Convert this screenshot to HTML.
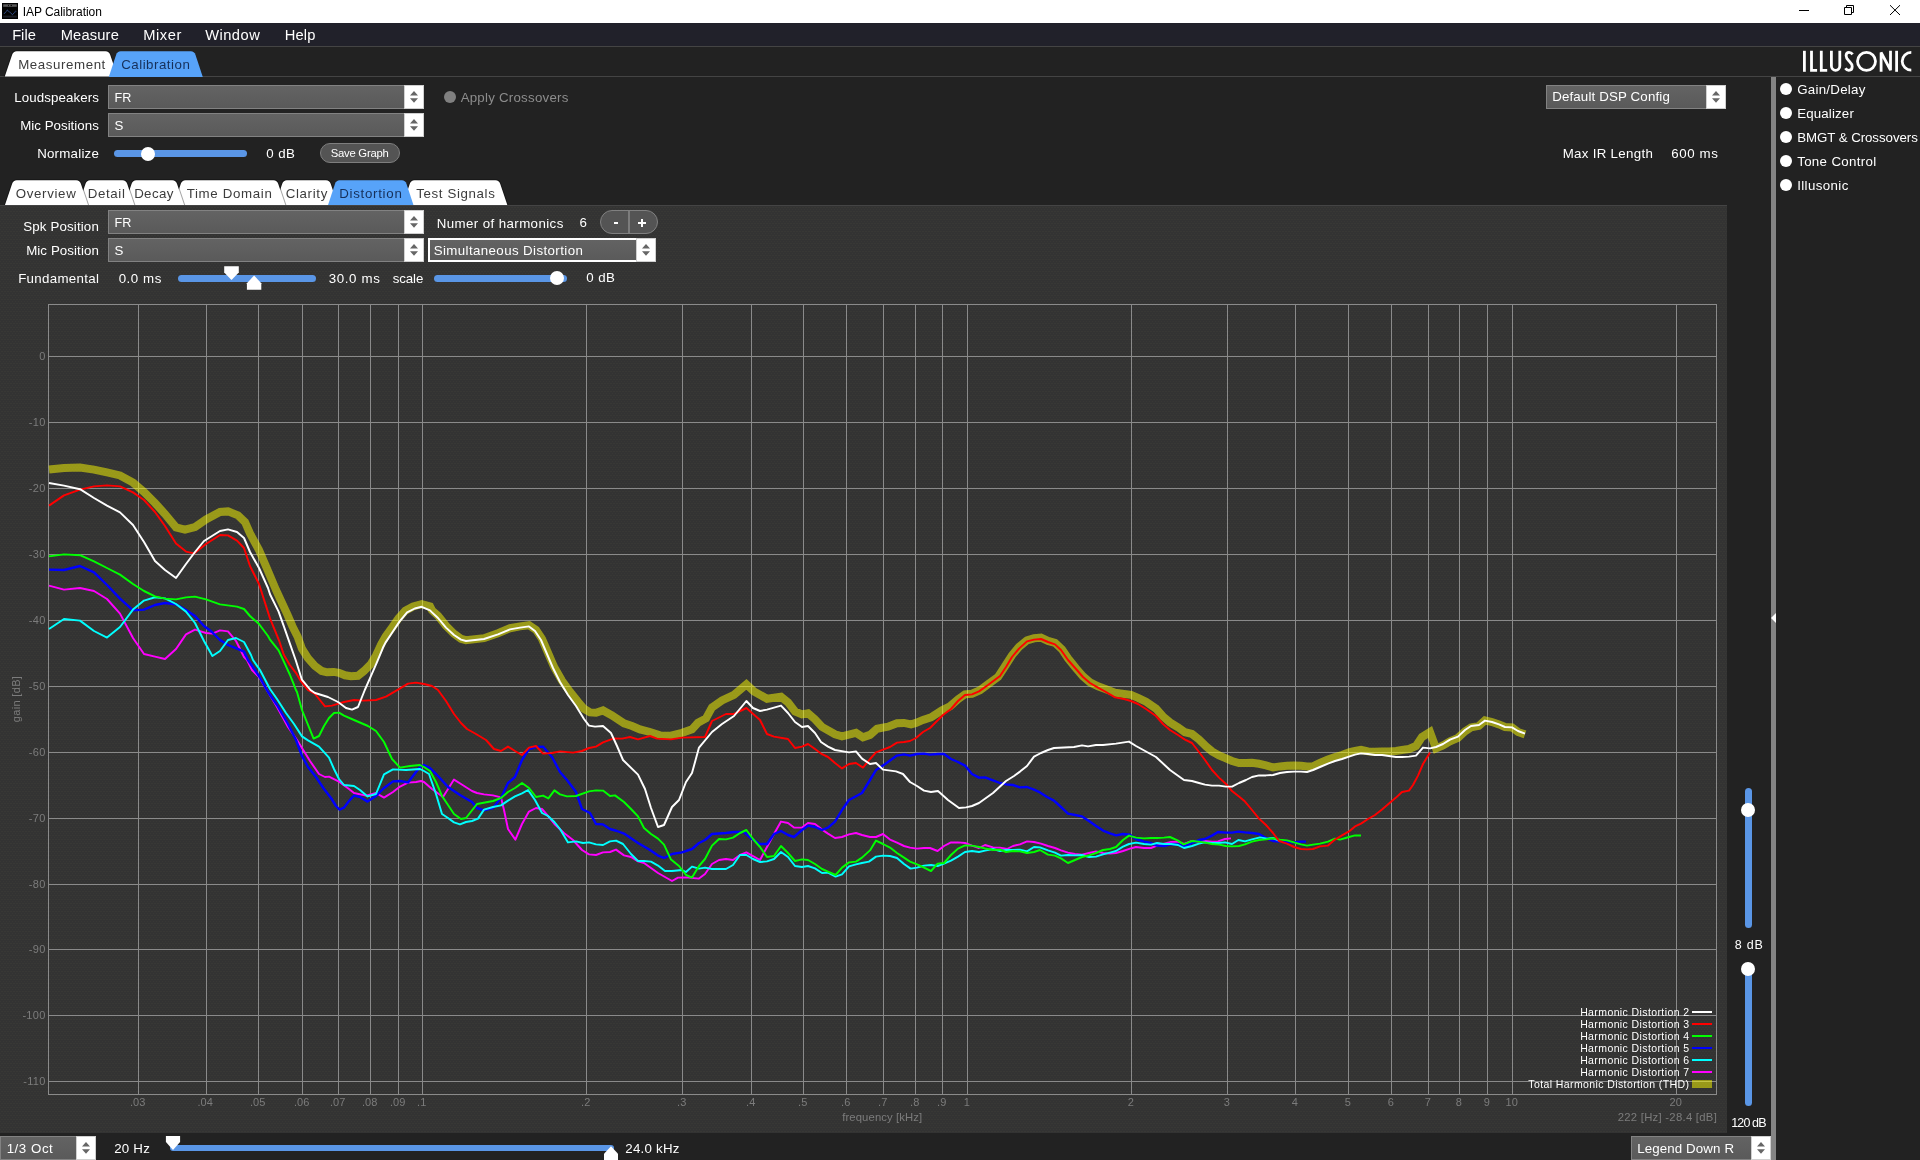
<!DOCTYPE html>
<html><head><meta charset="utf-8"><title>IAP Calibration</title>
<style>
html,body{margin:0;padding:0;background:#222;}
#root{will-change:transform;position:relative;width:1920px;height:1160px;overflow:hidden;background:#222;font-family:"Liberation Sans",sans-serif;}
.t{position:absolute;white-space:nowrap;line-height:20px;height:20px;}
</style></head><body><div id="root">
<div style="position:absolute;left:0px;top:0px;width:1920px;height:23px;background:#fff;"></div>
<svg style="position:absolute;left:2px;top:3px" width="16" height="16"><rect width="16" height="16" fill="#020202"/><rect x="1.200" y="1.300" width="13.600" height="2.500" fill="#5a5a5a"/><rect x="6" y="1.900" width="1" height="1.300" fill="#111"/><circle cx="9.300" cy="2.500" r="0.800" fill="#050505"/><path d="M2 10.700 L5.500 7.200 L10.500 11.700 L14.300 7.700" stroke="#34508a" stroke-width="1.100" fill="none" stroke-dasharray="1 0.600"/><rect x="1.200" y="12.600" width="13.600" height="2" fill="#1d1f26"/></svg>
<div class="t" style="left:22.65px;top:2.14px;font-size:12px;letter-spacing:-0.043px;color:#000;">IAP Calibration</div>
<svg style="position:absolute;left:1790px;top:0" width="130" height="23"><path d="M9 10.5H19" stroke="#000" stroke-width="1"/><path d="M54.5 7.5h7v7h-7z M56.5 7.5v-2h7v7h-2" stroke="#000" stroke-width="1" fill="none"/><path d="M100 5.200l10 9.800M110 5.200l-10 9.800" stroke="#000" stroke-width="1"/></svg>
<div style="position:absolute;left:0px;top:23px;width:1920px;height:23px;background:#21212a;"></div>
<div style="position:absolute;left:0px;top:46px;width:1920px;height:1px;background:#444;"></div>
<div class="t" style="left:12.15px;top:25.17px;font-size:14.7px;letter-spacing:0.011px;color:#fff;">File</div>
<div class="t" style="left:60.65px;top:25.17px;font-size:14.7px;letter-spacing:0.170px;color:#fff;">Measure</div>
<div class="t" style="left:143.15px;top:25.17px;font-size:14.7px;letter-spacing:0.565px;color:#fff;">Mixer</div>
<div class="t" style="left:205.15px;top:25.17px;font-size:14.7px;letter-spacing:0.474px;color:#fff;">Window</div>
<div class="t" style="left:284.65px;top:25.17px;font-size:14.7px;letter-spacing:0.164px;color:#fff;">Help</div>
<div style="position:absolute;left:0px;top:76px;width:1920px;height:1px;background:#444;"></div>
<svg style="position:absolute;left:0;top:0" width="700" height="206">
<clipPath id="c1"><rect x="0" y="40" width="700" height="37"/></clipPath><clipPath id="c2"><rect x="0" y="170" width="700" height="36"/></clipPath>
<g clip-path="url(#c1)">
<path d="M4.800000000000001 76.5 L12.12 54.8 Q13.3 51.3 16.8 51.3 L105.5 51.3 Q109 51.3 110.18 54.8 L117.5 76.5Z" fill="none" stroke="rgba(0,0,0,0.35)" stroke-width="2"/>
<path d="M4.800000000000001 76.5 L12.12 54.8 Q13.3 51.3 16.8 51.3 L105.5 51.3 Q109 51.3 110.18 54.8 L117.5 76.5Z" fill="#fff"/>
<path d="M108.8 77 L116.14 54.8 Q117.3 51.3 120.8 51.3 L190.8 51.3 Q194.3 51.3 195.46 54.8 L202.8 77Z" fill="#57a3f9"/>
</g><g clip-path="url(#c2)">
<path d="M402.5 205.5 L409.82 183.8 Q411 180.3 414.5 180.3 L495.5 180.3 Q499 180.3 500.18 183.8 L507.5 205.5Z" fill="none" stroke="rgba(0,0,0,0.35)" stroke-width="2"/>
<path d="M402.5 205.5 L409.82 183.8 Q411 180.3 414.5 180.3 L495.5 180.3 Q499 180.3 500.18 183.8 L507.5 205.5Z" fill="#fff"/>
<path d="M274.9 205.5 L282.22 183.8 Q283.4 180.3 286.9 180.3 L326.0 180.3 Q329.5 180.3 330.68 183.8 L338.0 205.5Z" fill="none" stroke="rgba(0,0,0,0.35)" stroke-width="2"/>
<path d="M274.9 205.5 L282.22 183.8 Q283.4 180.3 286.9 180.3 L326.0 180.3 Q329.5 180.3 330.68 183.8 L338.0 205.5Z" fill="#fff"/>
<path d="M173.5 205.5 L180.82 183.8 Q182 180.3 185.5 180.3 L273.5 180.3 Q277 180.3 278.18 183.8 L285.5 205.5Z" fill="none" stroke="rgba(0,0,0,0.35)" stroke-width="2"/>
<path d="M173.5 205.5 L180.82 183.8 Q182 180.3 185.5 180.3 L273.5 180.3 Q277 180.3 278.18 183.8 L285.5 205.5Z" fill="#fff"/>
<path d="M124.30000000000001 205.5 L131.62 183.8 Q132.8 180.3 136.3 180.3 L172.3 180.3 Q175.8 180.3 176.98 183.8 L184.3 205.5Z" fill="none" stroke="rgba(0,0,0,0.35)" stroke-width="2"/>
<path d="M124.30000000000001 205.5 L131.62 183.8 Q132.8 180.3 136.3 180.3 L172.3 180.3 Q175.8 180.3 176.98 183.8 L184.3 205.5Z" fill="#fff"/>
<path d="M78.2 205.5 L85.52 183.8 Q86.7 180.3 90.2 180.3 L122.5 180.3 Q126 180.3 127.18 183.8 L134.5 205.5Z" fill="none" stroke="rgba(0,0,0,0.35)" stroke-width="2"/>
<path d="M78.2 205.5 L85.52 183.8 Q86.7 180.3 90.2 180.3 L122.5 180.3 Q126 180.3 127.18 183.8 L134.5 205.5Z" fill="#fff"/>
<path d="M4.800000000000001 205.5 L12.12 183.8 Q13.3 180.3 16.8 180.3 L76.2 180.3 Q79.7 180.3 80.88 183.8 L88.2 205.5Z" fill="none" stroke="rgba(0,0,0,0.35)" stroke-width="2"/>
<path d="M4.800000000000001 205.5 L12.12 183.8 Q13.3 180.3 16.8 180.3 L76.2 180.3 Q79.7 180.3 80.88 183.8 L88.2 205.5Z" fill="#fff"/>
<path d="M327.7 206 L335.04 183.8 Q336.2 180.3 339.7 180.3 L401.8 180.3 Q405.3 180.3 406.46 183.8 L413.8 206Z" fill="#57a3f9"/>
</g></svg>
<div class="t" style="left:18.15px;top:54.65px;font-size:13.3px;letter-spacing:0.587px;color:#3c3c3c;">Measurement</div>
<div class="t" style="left:121.15px;top:54.65px;font-size:13.3px;letter-spacing:0.513px;color:#16305a;">Calibration</div>
<div class="t" style="left:15.65px;top:183.65px;font-size:13.3px;letter-spacing:0.677px;color:#3c3c3c;">Overview</div>
<div class="t" style="left:87.65px;top:183.65px;font-size:13.3px;letter-spacing:0.644px;color:#3c3c3c;">Detail</div>
<div class="t" style="left:134.15px;top:183.65px;font-size:13.3px;letter-spacing:0.374px;color:#3c3c3c;">Decay</div>
<div class="t" style="left:186.65px;top:183.65px;font-size:13.3px;letter-spacing:0.660px;color:#3c3c3c;">Time Domain</div>
<div class="t" style="left:285.65px;top:183.65px;font-size:13.3px;letter-spacing:0.666px;color:#3c3c3c;">Clarity</div>
<div class="t" style="left:339.15px;top:183.65px;font-size:13.3px;letter-spacing:0.723px;color:#16305a;">Distortion</div>
<div class="t" style="left:416.15px;top:183.65px;font-size:13.3px;letter-spacing:0.638px;color:#3c3c3c;">Test Signals</div>
<div class="t" style="left:14.15px;top:87.65px;font-size:13.3px;letter-spacing:0.107px;color:#fff;">Loudspeakers</div>
<div style="position:absolute;left:108px;top:85px;width:316px;height:24px;background:linear-gradient(#636363,#5a5a5a);box-sizing:border-box;border:1px solid #828282;"></div>
<div style="position:absolute;left:404px;top:85px;width:20px;height:24px;background:#fff;box-sizing:border-box;border:1px solid #d0d0d0;"></div>
<svg style="position:absolute;left:404px;top:85px" width="20" height="24"><path d="M6 10.6 L10 6.0 L14 10.6Z M6 13.2 L10 17.8 L14 13.2Z" fill="#666"/></svg>
<div class="t" style="left:114.60px;top:87.94px;font-size:12.6px;color:#fff;">FR</div>
<div class="t" style="left:20.15px;top:115.65px;font-size:13.3px;letter-spacing:0.030px;color:#fff;">Mic Positions</div>
<div style="position:absolute;left:108px;top:113px;width:316px;height:24px;background:linear-gradient(#636363,#5a5a5a);box-sizing:border-box;border:1px solid #828282;"></div>
<div style="position:absolute;left:404px;top:113px;width:20px;height:24px;background:#fff;box-sizing:border-box;border:1px solid #d0d0d0;"></div>
<svg style="position:absolute;left:404px;top:113px" width="20" height="24"><path d="M6 10.6 L10 6.0 L14 10.6Z M6 13.2 L10 17.8 L14 13.2Z" fill="#666"/></svg>
<div class="t" style="left:114.50px;top:115.95px;font-size:13.3px;color:#fff;">S</div>
<div class="t" style="left:37.15px;top:143.65px;font-size:13.3px;letter-spacing:0.231px;color:#fff;">Normalize</div>
<div style="position:absolute;left:114px;top:150.0px;width:133px;height:7px;background:#5a96e6;border-radius:3.5px;"></div>
<div style="position:absolute;left:141px;top:146.5px;width:14px;height:14px;background:#fff;border-radius:7px;"></div>
<div class="t" style="left:266.15px;top:143.65px;font-size:13.3px;letter-spacing:0.456px;color:#fff;">0 dB</div>
<div style="position:absolute;left:320px;top:143px;width:80px;height:20px;background:#545454;border:1px solid #7e7e7e;border-radius:10px;box-sizing:border-box;"></div>
<div class="t" style="left:330.65px;top:143.13px;font-size:11.3px;letter-spacing:-0.232px;color:#fff;">Save Graph</div>
<div style="position:absolute;left:444px;top:91px;width:12px;height:12px;background:#808080;border-radius:6px;"></div>
<div class="t" style="left:460.65px;top:87.65px;font-size:13.3px;letter-spacing:0.233px;color:#8c8c8c;">Apply Crossovers</div>
<div style="position:absolute;left:1546px;top:85px;width:180px;height:24px;background:linear-gradient(#636363,#5a5a5a);box-sizing:border-box;border:1px solid #828282;"></div>
<div style="position:absolute;left:1706px;top:85px;width:20px;height:24px;background:#fff;box-sizing:border-box;border:1px solid #d0d0d0;"></div>
<svg style="position:absolute;left:1706px;top:85px" width="20" height="24"><path d="M6 10.6 L10 6.0 L14 10.6Z M6 13.2 L10 17.8 L14 13.2Z" fill="#666"/></svg>
<div class="t" style="left:1552.15px;top:87.45px;font-size:13.3px;letter-spacing:0.152px;color:#fff;">Default DSP Config</div>
<div class="t" style="left:1562.65px;top:143.65px;font-size:13.3px;letter-spacing:0.307px;color:#fff;">Max IR Length</div>
<div class="t" style="left:1671.15px;top:143.65px;font-size:13.3px;letter-spacing:0.615px;color:#fff;">600 ms</div>
<svg style="position:absolute;left:1790px;top:44px" width="130" height="34" viewBox="0 0 130 34"><g fill="none" stroke="#fff" stroke-width="2.8"><path d="M14.4 6.8V27.8"/><path d="M21.500 6.8V26.3H27.1"/><path d="M31.3 6.8V26.3H37.2"/><path d="M41.4 6.8V22.1a4.2 4.2 0 0 0 8.4 0V6.8"/><path d="M62.600 10.400C61.600 8.900 60.500 8.300 59 8.300C57.200 8.300 56.100 9.800 56.100 11.800C56.100 14.500 58 16 59.500 17.500C61 19 62.200 20.500 62.200 22.500C62.200 24.800 60.800 26.300 58.800 26.300C57.300 26.300 56.200 25.600 55.400 24.300"/><circle cx="76.500" cy="17.3" r="9"/><path d="M91.100 27.8V8.500L100.500 26.200V6.800" stroke-linejoin="miter"/><path d="M106.600 6.8V27.800"/><path d="M121.300 8.400A9.100 8.900 0 0 0 121.300 26.200"/></g></svg>
<div style="position:absolute;left:1771px;top:77px;width:5px;height:1083px;background:#848484;"></div>
<svg style="position:absolute;left:1771px;top:612px" width="6" height="12"><path d="M5 1 L0 6 L5 11Z" fill="#fff"/></svg>
<div style="position:absolute;left:1779.6px;top:83px;width:12px;height:12px;background:#fff;border-radius:6px;"></div>
<div class="t" style="left:1797.15px;top:79.65px;font-size:13.3px;letter-spacing:0.270px;color:#fff;">Gain/Delay</div>
<div style="position:absolute;left:1779.6px;top:107px;width:12px;height:12px;background:#fff;border-radius:6px;"></div>
<div class="t" style="left:1797.15px;top:103.65px;font-size:13.3px;letter-spacing:0.155px;color:#fff;">Equalizer</div>
<div style="position:absolute;left:1779.6px;top:131px;width:12px;height:12px;background:#fff;border-radius:6px;"></div>
<div class="t" style="left:1797.15px;top:127.65px;font-size:13.3px;letter-spacing:-0.062px;color:#fff;">BMGT &amp; Crossovers</div>
<div style="position:absolute;left:1779.6px;top:155px;width:12px;height:12px;background:#fff;border-radius:6px;"></div>
<div class="t" style="left:1797.15px;top:151.65px;font-size:13.3px;letter-spacing:0.344px;color:#fff;">Tone Control</div>
<div style="position:absolute;left:1779.6px;top:179px;width:12px;height:12px;background:#fff;border-radius:6px;"></div>
<div class="t" style="left:1797.15px;top:175.65px;font-size:13.3px;letter-spacing:0.390px;color:#fff;">Illusonic</div>
<div style="position:absolute;left:0;top:205px;width:1727px;height:928px;background-color:#333;background-image:radial-gradient(circle at 0.5px 0.5px,#383835 0.6px,transparent 1px),radial-gradient(circle at 2px 2.5px,#383835 0.6px,transparent 1px);background-size:3px 4px;"></div>
<div style="position:absolute;left:0px;top:205px;width:1727px;height:1px;background:#444;"></div>
<div class="t" style="left:23.15px;top:216.95px;font-size:13.3px;letter-spacing:0.159px;color:#fff;">Spk Position</div>
<div style="position:absolute;left:108px;top:210px;width:316px;height:24px;background:linear-gradient(#636363,#5a5a5a);box-sizing:border-box;border:1px solid #828282;"></div>
<div style="position:absolute;left:404px;top:210px;width:20px;height:24px;background:#fff;box-sizing:border-box;border:1px solid #d0d0d0;"></div>
<svg style="position:absolute;left:404px;top:210px" width="20" height="24"><path d="M6 10.6 L10 6.0 L14 10.6Z M6 13.2 L10 17.8 L14 13.2Z" fill="#666"/></svg>
<div class="t" style="left:114.50px;top:212.64px;font-size:12.6px;color:#fff;">FR</div>
<div class="t" style="left:26.15px;top:240.65px;font-size:13.3px;letter-spacing:0.092px;color:#fff;">Mic Position</div>
<div style="position:absolute;left:108px;top:238px;width:316px;height:24px;background:linear-gradient(#636363,#5a5a5a);box-sizing:border-box;border:1px solid #828282;"></div>
<div style="position:absolute;left:404px;top:238px;width:20px;height:24px;background:#fff;box-sizing:border-box;border:1px solid #d0d0d0;"></div>
<svg style="position:absolute;left:404px;top:238px" width="20" height="24"><path d="M6 10.6 L10 6.0 L14 10.6Z M6 13.2 L10 17.8 L14 13.2Z" fill="#666"/></svg>
<div class="t" style="left:114.50px;top:240.75px;font-size:13.3px;color:#fff;">S</div>
<div class="t" style="left:436.65px;top:213.85px;font-size:13.3px;letter-spacing:0.408px;color:#fff;">Numer of harmonics</div>
<div class="t" style="left:579.50px;top:213.15px;font-size:13.3px;color:#fff;">6</div>
<div style="position:absolute;left:600px;top:210px;width:58px;height:24px;background:#545454;border:1px solid #808080;border-radius:12px;box-sizing:border-box;"></div>
<div style="position:absolute;left:628px;top:211px;width:2px;height:22px;background:#7c7c7c;"></div>
<div style="position:absolute;left:613.8px;top:221.8px;width:4.4px;height:2.2px;background:#fff;"></div>
<div style="position:absolute;left:638px;top:222px;width:8.1px;height:2px;background:#fff;"></div>
<div style="position:absolute;left:641px;top:219px;width:2.1px;height:7.8px;background:#fff;"></div>
<div style="position:absolute;left:428px;top:238px;width:228px;height:24px;background:linear-gradient(#636363,#5a5a5a);box-sizing:border-box;border:1px solid #828282;"></div>
<div style="position:absolute;left:428px;top:238px;width:212px;height:24px;box-sizing:border-box;border:2px solid #fff;"></div>
<div style="position:absolute;left:636px;top:238px;width:20px;height:24px;background:#fff;box-sizing:border-box;border:1px solid #d0d0d0;"></div>
<svg style="position:absolute;left:636px;top:238px" width="20" height="24"><path d="M6 10.6 L10 6.0 L14 10.6Z M6 13.2 L10 17.8 L14 13.2Z" fill="#666"/></svg>
<div class="t" style="left:433.65px;top:240.65px;font-size:13.3px;letter-spacing:0.398px;color:#fff;">Simultaneous Distortion</div>
<div class="t" style="left:18.15px;top:268.65px;font-size:13.3px;letter-spacing:0.309px;color:#fff;">Fundamental</div>
<div class="t" style="left:118.65px;top:268.65px;font-size:13.3px;letter-spacing:0.560px;color:#fff;">0.0 ms</div>
<div style="position:absolute;left:177.8px;top:274.5px;width:138.39999999999998px;height:7px;background:#5a96e6;border-radius:3.5px;"></div>
<svg style="position:absolute;left:220px;top:264px" width="46" height="30"><path d="M4.200 2.200 h14.600 v6.200 l-7.300 7.600 l-7.300 -7.600z" fill="#fff"/><path d="M26.900 25.700 h14.400 v-6.500 l-7.200 -7.600 l-7.200 7.600z" fill="#fff"/></svg>
<div class="t" style="left:328.65px;top:268.65px;font-size:13.3px;letter-spacing:0.653px;color:#fff;">30.0 ms</div>
<div class="t" style="left:392.65px;top:268.65px;font-size:13.3px;letter-spacing:-0.089px;color:#fff;">scale</div>
<div style="position:absolute;left:434px;top:274.5px;width:133px;height:7px;background:#5a96e6;border-radius:3.5px;"></div>
<div style="position:absolute;left:550px;top:271px;width:14px;height:14px;background:#fff;border-radius:7px;"></div>
<div class="t" style="left:586.15px;top:268.15px;font-size:13.3px;letter-spacing:0.456px;color:#fff;">0 dB</div>
<svg style="position:absolute;left:0;top:0" width="1920" height="1160">
<path d="M138.5 304V1094 M206 304V1094 M258.5 304V1094 M302.5 304V1094 M338.5 304V1094 M370.5 304V1094 M398.5 304V1094 M422.5 304V1094 M586.5 304V1094 M682.5 304V1094 M751.5 304V1094 M803.5 304V1094 M846.5 304V1094 M883.5 304V1094 M915.5 304V1094 M942.5 304V1094 M967.5 304V1094 M1131.5 304V1094 M1227.5 304V1094 M1295.5 304V1094 M1348.5 304V1094 M1391.5 304V1094 M1428.5 304V1094 M1459.5 304V1094 M1487.5 304V1094 M1512.5 304V1094 M1676.5 304V1094 M48 356.5H1716 M48 422.5H1716 M48 488.5H1716 M48 554.5H1716 M48 620.5H1716 M48 686.5H1716 M48 752.5H1716 M48 818.5H1716 M48 884.5H1716 M48 949.5H1716 M48 1015.5H1716 M48 1081.5H1716" stroke="#8a8a8a" stroke-width="1" fill="none" shape-rendering="crispEdges"/>
<rect x="48.5" y="304.5" width="1668" height="790" stroke="#8a8a8a" stroke-width="1" fill="none" shape-rendering="crispEdges"/>
<polyline points="49.0,469.6 64.0,468.0 80.0,467.6 94.0,469.6 107.0,472.4 120.0,475.4 133.0,482.6 144.0,492.0 155.0,503.0 165.0,514.0 176.0,527.4 185.0,529.6 195.0,527.0 206.0,519.4 220.0,512.0 228.0,511.4 238.0,515.4 245.0,522.0 250.0,533.4 259.0,550.0 268.0,571.0 276.0,590.0 281.2,601.2 287.2,614.1 292.4,626.2 297.6,636.6 301.9,648.6 307.9,658.1 314.8,665.9 321.7,671.0 326.9,672.3 333.8,671.9 339.0,672.8 345.0,675.3 351.0,676.2 357.9,675.8 364.0,671.0 370.9,664.1 376.0,655.5 381.2,644.3 385.5,636.6 392.4,627.1 398.4,618.4 405.3,610.7 413.1,606.4 421.7,604.2 430.0,606.4 432.0,610.4 438.0,615.8 446.0,625.8 454.0,633.8 461.0,638.8 466.0,640.2 484.0,638.2 498.0,633.2 510.0,628.2 520.0,626.4 529.0,625.2 536.0,629.8 542.0,638.8 548.0,652.8 554.0,666.8 562.0,680.8 570.0,691.8 578.0,701.8 584.0,708.8 590.0,712.4 596.0,712.8 603.0,710.4 612.0,715.4 624.0,723.4 632.0,726.0 640.0,729.4 650.0,732.0 660.0,735.4 670.0,735.8 682.0,732.8 692.0,729.4 698.0,722.8 706.0,718.4 712.0,707.4 722.0,700.4 734.0,694.8 746.4,684.4 754.0,691.4 767.0,698.8 781.0,696.8 788.0,702.4 795.0,711.4 802.0,714.4 808.0,713.3 815.0,719.3 822.0,726.9 835.0,734.3 842.0,736.3 856.0,732.9 863.0,737.3 870.0,734.9 877.0,728.7 888.0,726.7 897.0,723.3 904.0,722.9 911.0,724.3 916.0,722.9 923.0,719.9 931.0,717.3 942.0,710.3 950.0,706.3 958.0,699.3 965.0,694.3 972.0,693.7 980.0,690.3 988.0,684.3 998.0,676.9 1005.0,666.3 1012.0,655.3 1019.0,646.9 1027.0,640.3 1034.0,638.3 1041.0,637.7 1048.0,640.9 1055.0,642.9 1062.0,649.3 1068.0,658.3 1076.0,668.3 1083.0,676.3 1090.0,682.3 1098.0,686.3 1106.0,689.2 1115.0,692.7 1124.0,694.0 1131.0,694.9 1138.0,697.8 1146.0,701.7 1156.0,708.6 1163.0,716.5 1170.0,722.4 1178.0,727.3 1185.0,732.2 1192.0,734.0 1199.0,739.4 1206.0,746.4 1212.0,751.4 1219.0,755.4 1226.0,758.4 1232.0,761.0 1239.0,763.0 1246.0,763.0 1252.0,762.8 1259.0,763.8 1266.0,765.4 1273.0,767.4 1280.0,766.4 1287.0,765.8 1294.0,765.4 1301.0,765.8 1307.0,766.4 1313.0,766.4 1320.0,762.8 1328.0,759.4 1335.0,757.0 1342.0,755.0 1349.0,752.4 1355.0,750.8 1361.0,749.8 1368.0,751.4 1375.0,751.8 1382.0,751.4 1389.0,751.4 1396.0,751.0 1402.0,750.0 1409.0,749.0 1416.0,746.0 1422.0,737.0 1430.0,732.0 1436.0,748.4 1443.0,745.4 1450.0,741.4 1458.0,737.8 1465.0,731.4 1471.0,727.4 1479.0,725.8 1485.0,720.4 1492.0,722.0 1499.0,724.4 1505.0,727.0 1512.0,727.4 1518.0,732.0 1525.0,734.4" stroke="rgba(255,255,0,0.5)" stroke-width="8" fill="none" stroke-linejoin="miter" stroke-miterlimit="4"/>
<polyline points="49.0,585.6 64.0,589.6 80.0,588.0 94.0,591.0 107.0,599.0 120.0,613.6 133.0,638.0 144.0,654.0 155.0,656.6 165.0,659.0 176.0,649.0 186.0,634.4 195.0,629.6 206.0,633.0 212.4,633.6 220.0,630.4 228.0,631.4 236.0,641.0 244.0,657.0 247.0,660.0 252.0,670.0 259.0,677.0 268.0,692.0 277.0,707.0 288.0,727.0 297.0,740.0 302.0,748.0 310.0,761.0 319.0,774.0 325.0,777.0 329.0,776.6 339.0,781.6 349.0,789.0 354.0,793.0 366.0,795.6 376.0,793.0 384.0,797.6 393.0,792.0 400.0,786.6 408.0,782.6 416.0,782.0 421.0,781.0 424.0,782.0 432.0,789.0 443.0,797.0 454.0,779.6 461.0,784.0 472.0,791.0 477.0,793.0 484.0,794.4 493.0,795.4 501.0,797.4 504.0,810.0 508.0,829.0 515.4,839.6 522.0,824.0 529.0,811.6 536.0,808.0 542.0,809.0 548.0,816.0 554.4,824.0 564.0,833.0 573.0,840.0 582.0,850.0 589.0,854.4 596.0,855.0 603.0,852.4 610.0,852.0 616.0,849.6 624.0,855.4 631.0,857.0 638.0,861.4 644.0,863.0 651.0,868.0 658.0,873.0 665.0,877.0 672.0,881.0 678.0,877.6 686.0,877.4 699.0,878.6 705.0,874.0 712.0,864.0 719.0,860.0 726.0,859.0 733.0,860.0 740.0,855.0 746.4,852.4 760.0,860.0 767.0,847.0 774.0,834.0 781.0,821.6 788.0,823.0 794.0,827.6 802.0,827.6 808.0,823.0 815.0,824.0 822.0,829.6 828.0,833.6 835.0,838.0 842.0,837.0 849.0,834.4 856.0,833.0 862.0,835.0 870.0,837.0 876.0,837.0 883.0,834.0 890.0,839.6 897.0,842.6 904.0,846.0 910.0,847.6 917.0,848.6 924.0,848.0 930.0,848.0 937.6,851.0 944.0,846.0 951.0,842.4 958.0,842.4 965.0,843.0 972.0,845.6 979.0,848.0 985.0,845.0 993.0,847.4 1000.0,847.6 1007.0,849.0 1013.0,846.0 1020.0,844.4 1027.0,841.4 1034.0,842.0 1041.0,843.6 1048.0,846.0 1055.0,848.0 1061.0,850.4 1068.0,852.6 1075.0,854.0 1082.0,854.6 1089.0,853.0 1096.0,851.4 1103.0,853.0 1110.0,853.6 1116.0,853.0 1123.0,851.0 1130.0,848.6 1136.0,847.0 1144.0,848.0 1151.0,848.0 1157.0,845.6 1164.0,843.6 1171.0,842.0 1178.0,841.6 1184.0,844.0 1192.0,841.0 1199.0,841.6 1205.0,841.0 1212.0,841.6 1218.0,841.4 1225.0,839.0 1231.0,838.4" stroke="#f0f" stroke-width="1.95" fill="none" stroke-linejoin="round"/>
<polyline points="49.0,569.6 64.0,570.0 80.0,566.0 94.0,572.4 107.0,585.0 120.0,598.6 133.0,610.4 144.0,609.6 155.0,605.0 165.0,603.0 176.0,604.4 186.0,610.0 195.0,616.0 204.0,626.0 212.0,632.0 220.0,640.0 228.0,645.0 237.0,648.6 244.0,651.6 248.0,660.0 259.0,676.0 268.0,692.0 277.0,705.0 288.0,724.0 296.0,740.0 302.0,756.0 308.0,767.0 316.0,777.0 324.0,789.0 331.0,798.0 336.0,806.0 339.6,809.6 344.0,807.6 349.0,801.0 354.0,795.6 360.0,797.0 367.6,801.6 376.0,796.0 384.0,788.0 393.0,781.4 400.0,781.0 408.0,782.4 416.0,772.0 420.0,767.0 424.0,765.0 430.0,768.0 438.0,776.0 448.0,787.0 460.0,795.0 472.0,802.0 477.0,808.0 484.0,810.4 493.0,808.0 501.0,798.0 508.0,783.0 515.0,777.0 522.0,760.0 529.0,749.0 536.0,747.0 543.0,746.6 552.0,757.0 560.0,772.0 567.0,780.0 576.0,792.0 582.0,809.0 590.0,813.0 596.0,824.0 603.0,824.4 610.0,829.0 617.0,831.0 624.0,833.6 638.0,843.0 650.0,850.0 658.0,855.6 664.0,858.0 672.0,854.0 682.0,852.4 692.0,849.0 699.0,843.0 705.0,840.0 712.0,834.0 726.0,833.0 734.0,832.0 744.0,832.0 752.0,839.0 760.0,844.0 767.0,844.0 774.0,834.0 781.0,831.0 788.0,835.0 794.0,837.0 802.0,830.0 808.0,825.6 815.0,827.0 822.0,830.0 828.0,827.6 835.0,821.6 842.0,810.0 849.0,800.0 862.0,793.0 870.0,780.0 876.0,770.0 883.0,765.6 890.0,760.6 897.0,755.6 904.0,754.4 910.0,755.6 917.0,754.0 924.0,753.6 930.0,754.6 938.0,754.0 944.0,754.0 951.0,759.0 958.0,762.0 965.0,765.6 972.0,774.0 979.0,777.6 985.0,777.4 993.0,780.4 1000.0,783.0 1006.0,784.4 1013.0,785.0 1020.0,787.4 1027.0,787.0 1034.0,789.6 1040.0,792.4 1047.0,797.0 1054.0,800.6 1061.0,807.0 1068.0,813.6 1075.0,815.0 1082.0,816.4 1089.0,821.0 1096.0,826.0 1103.0,830.6 1110.0,833.4 1116.0,835.4 1123.0,834.0 1130.0,834.6 1136.0,839.0 1144.0,841.6 1151.0,843.0 1157.0,845.6 1164.0,846.0 1171.0,844.0 1178.0,844.4 1184.0,846.4 1192.0,843.0 1199.0,840.0 1205.0,839.0 1212.0,835.6 1218.0,832.0 1226.0,832.6 1232.0,832.6 1238.4,831.6 1245.0,832.4 1252.0,833.0 1259.0,834.0 1266.0,838.0 1273.0,841.0 1280.0,841.6 1287.0,842.0 1294.0,842.4 1301.0,841.6 1306.0,841.6" stroke="#00f" stroke-width="2.4" fill="none" stroke-linejoin="round"/>
<polyline points="49.0,629.0 64.0,619.0 80.0,620.6 94.0,631.0 107.0,637.6 120.0,627.0 133.0,609.6 144.0,600.6 155.0,597.2 165.0,598.4 176.0,604.0 186.0,611.6 195.0,623.0 204.0,641.0 212.4,656.0 220.0,651.0 228.0,640.0 236.0,638.0 244.0,642.0 251.0,655.0 253.0,660.0 260.0,670.0 270.0,689.0 277.0,699.0 286.0,713.0 294.0,724.0 302.0,736.4 308.0,740.4 319.0,746.6 329.0,757.6 334.0,769.0 339.0,779.0 344.0,785.0 354.0,786.0 360.0,790.0 367.6,796.4 376.0,794.0 384.0,774.4 393.0,769.4 406.0,770.0 420.0,769.0 424.0,771.0 429.0,774.0 436.0,794.0 442.0,814.0 448.0,818.0 454.0,822.4 460.0,824.4 466.0,822.0 472.0,821.0 478.0,818.6 484.0,809.6 493.0,807.0 501.0,805.4 508.0,800.6 515.0,796.4 522.0,793.4 528.0,790.0 535.0,800.0 542.0,813.0 548.0,816.0 554.4,822.0 560.0,829.0 568.0,842.4 576.0,841.4 583.0,843.0 589.0,842.4 596.0,844.4 603.0,845.0 610.0,841.4 616.0,840.6 623.0,844.0 631.0,854.0 638.0,861.0 644.0,861.0 651.0,861.6 658.0,865.6 665.0,871.0 672.0,871.0 682.0,870.0 686.0,872.0 692.0,866.6 699.0,868.6 705.0,867.6 712.0,869.0 726.0,869.0 733.0,865.0 740.0,855.0 746.4,855.0 753.0,859.0 760.0,862.0 767.0,861.4 774.0,859.0 781.0,852.0 788.0,857.0 795.0,866.0 802.0,867.0 808.0,866.0 815.0,868.4 822.0,873.0 828.0,872.6 835.6,876.6 842.0,874.4 849.0,866.4 856.0,864.4 862.0,863.0 869.0,861.6 876.0,856.6 883.0,855.6 890.0,856.0 897.0,858.0 904.0,864.0 910.6,868.6 917.0,867.6 924.0,865.6 931.0,865.0 937.6,866.0 944.0,863.6 951.0,860.6 958.0,856.6 965.0,852.0 972.0,851.0 979.0,852.0 985.0,850.6 993.0,849.0 1000.0,851.0 1006.0,850.0 1013.0,850.0 1020.0,849.6 1027.0,851.4 1034.0,847.0 1040.0,847.4 1048.0,850.4 1055.0,852.6 1061.0,855.6 1068.0,855.0 1075.0,855.4 1082.0,855.0 1089.0,857.0 1096.0,856.6 1103.0,854.4 1110.0,852.6 1116.0,851.0 1123.0,846.6 1129.0,844.0 1136.0,842.6 1144.0,844.0 1151.0,844.6 1157.0,843.0 1164.0,844.0 1171.0,844.0 1178.0,845.0 1184.0,848.0 1192.0,846.0 1199.0,843.6 1205.0,842.4 1212.0,843.0 1218.0,843.0 1225.0,842.4 1232.0,844.0 1238.4,840.0 1245.0,841.4 1252.0,839.4 1260.0,837.4 1267.0,838.6 1273.0,838.0 1280.0,841.0" stroke="#0ff" stroke-width="1.95" fill="none" stroke-linejoin="round"/>
<polyline points="49.0,556.4 64.0,554.4 80.0,555.2 94.0,561.4 107.0,568.0 120.0,574.6 133.0,584.0 144.0,591.0 155.0,596.4 165.0,598.6 176.0,599.4 186.0,597.4 195.0,596.6 206.0,599.4 220.0,604.4 237.0,606.6 244.0,609.0 250.0,616.0 259.0,624.0 268.0,636.0 270.0,639.6 278.6,650.3 284.7,663.3 289.8,674.5 293.3,683.1 295.9,690.0 297.0,692.0 302.0,710.0 313.6,738.6 319.0,736.0 324.0,726.0 329.0,718.0 334.0,713.0 339.0,712.6 344.0,715.6 354.0,720.0 368.0,726.0 376.0,731.0 384.0,742.0 392.0,759.0 400.0,767.6 410.0,766.0 420.0,765.0 424.0,767.0 430.0,771.0 436.0,782.0 442.0,796.0 448.0,805.0 454.0,814.0 461.0,819.0 466.0,818.0 477.0,804.0 493.0,801.0 501.0,798.0 508.0,792.0 515.0,788.0 522.0,783.0 529.0,788.0 536.0,797.0 543.0,795.6 548.4,798.4 554.4,790.4 560.0,794.4 567.0,796.4 576.0,796.0 589.0,791.4 596.0,790.4 603.0,790.6 610.0,796.0 615.0,795.4 624.0,802.0 631.0,809.0 638.0,816.4 644.0,828.0 651.0,834.0 658.0,838.6 664.0,844.6 671.0,859.6 679.0,866.0 686.0,875.0 692.0,877.6 699.0,866.0 705.0,859.0 712.0,845.6 719.0,839.0 726.0,839.4 733.0,837.6 740.0,833.0 746.4,830.0 753.0,839.0 760.0,847.0 767.0,857.0 774.0,856.0 781.0,846.0 788.0,853.0 795.0,861.0 802.0,859.4 808.0,860.0 815.0,864.0 822.0,869.0 828.0,871.6 835.6,875.0 842.0,867.6 849.0,862.4 856.0,861.6 862.0,857.6 870.0,850.4 876.0,840.6 883.0,844.0 890.0,847.6 897.0,853.0 904.0,857.6 910.0,861.6 917.0,864.4 924.0,867.6 931.0,871.0 937.6,863.6 944.0,863.0 951.0,855.0 958.0,848.6 965.0,845.4 972.0,845.6 979.0,847.0 985.0,848.4 993.0,850.0 1000.0,849.6 1006.0,852.0 1013.0,851.0 1020.0,851.4 1027.0,853.0 1034.0,852.0 1040.0,850.0 1048.0,854.6 1055.0,855.6 1061.0,858.4 1068.0,863.0 1075.0,860.0 1082.0,857.0 1089.0,855.4 1096.0,853.0 1103.0,850.0 1110.0,849.0 1116.0,847.0 1123.0,840.0 1129.0,835.6 1136.0,837.6 1144.0,838.4 1151.0,838.0 1157.0,838.0 1164.0,837.6 1170.0,837.0 1178.0,840.6 1183.6,844.4 1192.0,841.0 1199.0,841.6 1205.0,842.6 1212.0,844.0 1219.0,844.6 1226.0,846.0 1232.0,846.4 1239.0,846.0 1245.0,844.4 1252.0,841.6 1259.0,840.0 1266.0,839.4 1273.0,838.4 1280.0,839.6 1287.0,840.4 1294.0,842.4 1301.0,844.4 1307.0,845.6 1313.0,844.6 1320.0,843.6 1328.0,841.6 1335.0,838.6 1340.0,839.6 1349.0,837.0 1355.0,835.4 1361.0,835.4" stroke="#0f0" stroke-width="1.95" fill="none" stroke-linejoin="round"/>
<polyline points="49.0,505.6 64.0,495.4 80.0,489.6 94.0,486.4 107.0,485.4 120.0,486.4 133.0,492.4 144.0,500.0 155.0,512.0 165.0,526.0 176.0,543.6 186.0,551.6 194.0,553.4 206.0,544.0 220.0,535.0 228.0,535.4 237.0,540.6 244.0,548.0 250.0,566.0 259.0,584.0 270.0,618.4 274.3,628.8 279.5,641.7 283.8,654.7 289.8,665.0 295.9,672.8 301.0,681.4 307.9,690.0 315.0,694.0 325.0,706.4 332.0,705.6 344.0,702.0 354.0,700.0 364.0,700.6 376.0,700.0 386.0,696.6 398.0,689.6 408.0,683.6 416.0,682.6 424.0,684.0 432.0,686.0 438.0,690.0 446.0,701.0 454.0,714.0 461.0,723.0 467.0,729.0 476.0,734.0 486.0,740.0 494.0,749.0 501.0,751.0 508.0,746.6 515.0,751.0 522.0,755.0 529.0,747.6 536.0,746.0 543.0,753.6 552.0,753.0 560.0,751.4 573.0,752.6 582.0,751.0 589.0,748.0 596.0,746.6 603.0,742.4 614.0,738.4 622.0,738.6 630.0,737.0 638.0,739.4 650.0,736.0 657.0,738.6 671.0,739.4 682.0,737.6 705.0,737.0 712.0,721.0 726.0,714.0 734.0,714.0 746.4,708.0 760.0,720.0 767.0,734.0 774.0,736.6 788.0,739.0 795.0,748.0 802.0,746.6 808.0,744.0 815.0,749.0 821.0,753.6 828.0,757.0 835.0,763.0 842.0,768.4 849.0,764.0 856.0,763.0 863.0,767.6 870.0,759.0 876.0,752.4 883.0,749.6 890.0,747.0 897.0,742.6 904.0,742.0 910.0,741.0 916.0,738.0 923.0,732.0 930.0,728.0 936.0,722.0 943.0,715.0 951.0,709.0 958.0,701.0 965.0,695.0 972.0,694.4 979.0,691.4 988.0,685.0 1000.0,676.0 1006.0,667.0 1012.0,657.0 1019.0,648.6 1027.0,641.4 1034.0,639.6 1041.0,639.0 1048.0,642.0 1055.0,644.4 1061.0,650.0 1068.0,660.0 1076.0,669.0 1083.0,677.0 1090.0,683.0 1098.0,687.6 1106.0,692.0 1115.0,697.4 1124.0,699.0 1131.0,701.0 1138.0,704.0 1146.0,709.0 1156.0,716.0 1163.0,724.0 1170.0,730.0 1178.0,735.0 1185.0,739.6 1192.0,743.0 1199.0,752.0 1205.0,760.0 1212.0,770.0 1219.0,777.6 1226.0,784.0 1232.0,791.0 1239.0,796.6 1245.0,801.6 1252.0,810.0 1259.0,818.6 1266.0,825.0 1273.0,833.0 1279.0,841.0 1287.0,843.6 1294.0,847.0 1301.0,849.0 1307.0,849.4 1313.0,849.0 1320.0,846.4 1328.0,845.6 1335.0,839.6 1342.0,835.4 1349.0,831.4 1355.0,826.4 1361.0,823.6 1368.0,819.0 1375.0,815.0 1382.0,809.6 1389.0,803.6 1396.0,797.6 1402.0,792.0 1409.0,790.6 1413.0,785.0 1418.0,775.6 1423.0,764.0 1430.0,752.4" stroke="#f00" stroke-width="1.95" fill="none" stroke-linejoin="round"/>
<polyline points="49.0,483.0 64.0,485.6 80.0,489.2 94.0,498.0 107.0,505.6 120.0,512.4 133.0,525.0 144.0,542.0 155.0,561.0 165.0,570.0 176.0,578.0 186.0,564.0 195.0,552.0 204.0,541.0 220.0,531.0 228.0,529.4 237.0,532.0 244.0,538.0 250.0,552.0 259.0,568.0 268.0,588.0 270.0,594.3 278.6,611.6 283.8,626.2 289.8,643.4 295.9,660.7 301.9,679.7 310.5,690.0 315.0,693.0 328.0,697.0 338.0,702.0 346.0,708.0 352.0,709.6 358.0,707.0 364.8,690.0 370.9,676.2 376.9,662.4 382.9,647.8 385.5,642.6 392.4,632.2 399.3,621.9 407.1,612.4 414.8,608.5 421.7,606.8 430.0,610.3 432.0,612.4 438.0,618.0 446.0,627.6 454.0,635.0 461.0,639.6 466.0,641.0 484.0,639.0 498.0,634.4 510.0,629.4 520.0,627.6 529.0,626.4 535.0,631.0 541.0,640.0 547.0,654.0 553.0,668.0 560.0,682.0 568.0,695.0 576.0,706.0 584.0,719.0 589.0,725.6 595.0,726.6 603.0,726.0 611.0,733.0 617.0,746.0 623.0,760.0 638.0,774.6 645.0,789.0 651.0,808.0 658.0,827.0 664.0,825.0 672.0,807.0 679.0,800.0 686.0,782.0 692.0,773.0 699.0,747.6 712.0,732.0 722.0,724.0 734.0,716.0 746.4,701.0 753.0,708.0 760.0,711.0 767.0,709.6 781.0,705.6 788.0,713.0 795.0,722.0 802.0,727.0 808.0,726.0 815.0,733.0 821.0,742.0 828.0,746.6 835.0,750.0 849.0,752.4 856.0,751.4 862.0,758.6 870.0,764.0 876.0,763.0 883.0,769.6 896.0,771.4 903.0,774.0 910.0,782.0 917.0,786.0 924.0,790.6 931.0,792.0 938.0,791.0 948.0,800.0 959.0,808.0 966.0,807.4 972.0,806.0 979.0,803.0 993.0,793.0 1006.0,781.0 1014.0,776.0 1020.0,771.6 1027.0,766.0 1034.0,756.6 1041.0,753.0 1048.0,750.0 1054.0,748.0 1074.0,747.0 1082.0,745.4 1088.0,746.4 1096.0,745.0 1103.0,745.0 1116.0,743.6 1129.0,741.6 1136.0,746.0 1156.0,757.0 1170.0,770.0 1184.0,780.0 1192.0,781.0 1199.0,783.0 1205.0,784.6 1212.0,785.6 1219.0,785.6 1226.0,786.6 1232.0,786.6 1239.0,783.0 1246.0,780.0 1252.0,777.0 1259.0,775.4 1266.0,775.4 1273.0,775.0 1280.0,773.0 1287.0,772.0 1294.0,771.6 1301.0,771.6 1307.0,772.0 1313.0,770.0 1320.0,767.0 1328.0,763.6 1335.0,761.0 1342.0,759.0 1349.0,756.6 1355.0,754.6 1361.0,753.4 1368.0,754.0 1375.0,755.0 1382.0,755.0 1389.0,756.0 1396.0,757.0 1402.0,757.0 1409.0,756.6 1416.0,755.6 1423.0,747.6 1430.0,748.4 1436.0,747.0 1443.0,744.0 1450.0,739.6 1458.0,736.6 1465.0,730.0 1471.0,726.0 1479.0,725.0 1485.0,720.6 1492.0,722.0 1499.0,724.4 1505.0,727.0 1512.0,727.4 1518.0,731.0 1525.0,733.6" stroke="#fff" stroke-width="1.95" fill="none" stroke-linejoin="round"/>
<path d="M1692 1012H1712" stroke="#fff" stroke-width="2"/>
<path d="M1692 1024H1712" stroke="#f00" stroke-width="2"/>
<path d="M1692 1036H1712" stroke="#0f0" stroke-width="2"/>
<path d="M1692 1048H1712" stroke="#00f" stroke-width="2"/>
<path d="M1692 1060H1712" stroke="#0ff" stroke-width="2"/>
<path d="M1692 1072H1712" stroke="#f0f" stroke-width="2"/>
<rect x="1692" y="1080" width="20" height="8" fill="rgba(255,255,0,0.5)"/>
</svg>
<div class="t" style="left:39.18px;top:346.43px;font-size:11px;letter-spacing:0.3px;color:#7c7c7c;">0</div>
<div class="t" style="left:28.80px;top:412.43px;font-size:11px;letter-spacing:0.3px;color:#7c7c7c;">-10</div>
<div class="t" style="left:28.80px;top:478.43px;font-size:11px;letter-spacing:0.3px;color:#7c7c7c;">-20</div>
<div class="t" style="left:28.80px;top:544.43px;font-size:11px;letter-spacing:0.3px;color:#7c7c7c;">-30</div>
<div class="t" style="left:28.80px;top:610.43px;font-size:11px;letter-spacing:0.3px;color:#7c7c7c;">-40</div>
<div class="t" style="left:28.80px;top:676.43px;font-size:11px;letter-spacing:0.3px;color:#7c7c7c;">-50</div>
<div class="t" style="left:28.80px;top:742.43px;font-size:11px;letter-spacing:0.3px;color:#7c7c7c;">-60</div>
<div class="t" style="left:28.80px;top:808.43px;font-size:11px;letter-spacing:0.3px;color:#7c7c7c;">-70</div>
<div class="t" style="left:28.80px;top:874.43px;font-size:11px;letter-spacing:0.3px;color:#7c7c7c;">-80</div>
<div class="t" style="left:28.80px;top:939.43px;font-size:11px;letter-spacing:0.3px;color:#7c7c7c;">-90</div>
<div class="t" style="left:22.38px;top:1005.43px;font-size:11px;letter-spacing:0.3px;color:#7c7c7c;">-100</div>
<div class="t" style="left:23.20px;top:1071.43px;font-size:11px;letter-spacing:0.3px;color:#7c7c7c;">-110</div>
<div class="t" style="left:130.05px;top:1092.43px;font-size:11px;letter-spacing:0px;color:#7c7c7c;">.03</div>
<div class="t" style="left:197.55px;top:1092.43px;font-size:11px;letter-spacing:0px;color:#7c7c7c;">.04</div>
<div class="t" style="left:250.05px;top:1092.43px;font-size:11px;letter-spacing:0px;color:#7c7c7c;">.05</div>
<div class="t" style="left:294.05px;top:1092.43px;font-size:11px;letter-spacing:0px;color:#7c7c7c;">.06</div>
<div class="t" style="left:330.05px;top:1092.43px;font-size:11px;letter-spacing:0px;color:#7c7c7c;">.07</div>
<div class="t" style="left:362.05px;top:1092.43px;font-size:11px;letter-spacing:0px;color:#7c7c7c;">.08</div>
<div class="t" style="left:390.05px;top:1092.43px;font-size:11px;letter-spacing:0px;color:#7c7c7c;">.09</div>
<div class="t" style="left:417.11px;top:1092.43px;font-size:11px;letter-spacing:0px;color:#7c7c7c;">.1</div>
<div class="t" style="left:581.11px;top:1092.43px;font-size:11px;letter-spacing:0px;color:#7c7c7c;">.2</div>
<div class="t" style="left:677.11px;top:1092.43px;font-size:11px;letter-spacing:0px;color:#7c7c7c;">.3</div>
<div class="t" style="left:746.11px;top:1092.43px;font-size:11px;letter-spacing:0px;color:#7c7c7c;">.4</div>
<div class="t" style="left:798.11px;top:1092.43px;font-size:11px;letter-spacing:0px;color:#7c7c7c;">.5</div>
<div class="t" style="left:841.11px;top:1092.43px;font-size:11px;letter-spacing:0px;color:#7c7c7c;">.6</div>
<div class="t" style="left:878.11px;top:1092.43px;font-size:11px;letter-spacing:0px;color:#7c7c7c;">.7</div>
<div class="t" style="left:910.11px;top:1092.43px;font-size:11px;letter-spacing:0px;color:#7c7c7c;">.8</div>
<div class="t" style="left:937.11px;top:1092.43px;font-size:11px;letter-spacing:0px;color:#7c7c7c;">.9</div>
<div class="t" style="left:963.64px;top:1092.43px;font-size:11px;letter-spacing:0px;color:#7c7c7c;">1</div>
<div class="t" style="left:1127.64px;top:1092.43px;font-size:11px;letter-spacing:0px;color:#7c7c7c;">2</div>
<div class="t" style="left:1223.64px;top:1092.43px;font-size:11px;letter-spacing:0px;color:#7c7c7c;">3</div>
<div class="t" style="left:1291.64px;top:1092.43px;font-size:11px;letter-spacing:0px;color:#7c7c7c;">4</div>
<div class="t" style="left:1344.64px;top:1092.43px;font-size:11px;letter-spacing:0px;color:#7c7c7c;">5</div>
<div class="t" style="left:1387.64px;top:1092.43px;font-size:11px;letter-spacing:0px;color:#7c7c7c;">6</div>
<div class="t" style="left:1424.64px;top:1092.43px;font-size:11px;letter-spacing:0px;color:#7c7c7c;">7</div>
<div class="t" style="left:1455.64px;top:1092.43px;font-size:11px;letter-spacing:0px;color:#7c7c7c;">8</div>
<div class="t" style="left:1483.64px;top:1092.43px;font-size:11px;letter-spacing:0px;color:#7c7c7c;">9</div>
<div class="t" style="left:1505.58px;top:1092.43px;font-size:11px;letter-spacing:0px;color:#7c7c7c;">10</div>
<div class="t" style="left:1669.58px;top:1092.43px;font-size:11px;letter-spacing:0px;color:#7c7c7c;">20</div>
<div class="t" style="left:842.25px;top:1107.33px;font-size:11.3px;letter-spacing:0.102px;color:#7c7c7c;">frequency [kHz]</div>
<div class="t" style="left:1617.65px;top:1107.33px;font-size:11.3px;letter-spacing:0.275px;color:#7c7c7c;">222 [Hz] -28.4 [dB]</div>
<div class="t" style="left:-14.200px;top:689.300px;width:60px;text-align:center;font-size:11px;color:#7c7c7c;transform:rotate(-90deg);letter-spacing:0.35px">gain [dB]</div>
<div class="t" style="left:1580.15px;top:1002.12px;font-size:10.5px;letter-spacing:0.397px;color:#fff;">Harmonic Distortion 2</div>
<div class="t" style="left:1580.15px;top:1014.12px;font-size:10.5px;letter-spacing:0.397px;color:#fff;">Harmonic Distortion 3</div>
<div class="t" style="left:1580.15px;top:1026.12px;font-size:10.5px;letter-spacing:0.397px;color:#fff;">Harmonic Distortion 4</div>
<div class="t" style="left:1580.15px;top:1038.12px;font-size:10.5px;letter-spacing:0.397px;color:#fff;">Harmonic Distortion 5</div>
<div class="t" style="left:1580.15px;top:1050.12px;font-size:10.5px;letter-spacing:0.397px;color:#fff;">Harmonic Distortion 6</div>
<div class="t" style="left:1580.15px;top:1062.12px;font-size:10.5px;letter-spacing:0.397px;color:#fff;">Harmonic Distortion 7</div>
<div class="t" style="left:1528.35px;top:1074.12px;font-size:10.5px;letter-spacing:0.397px;color:#fff;">Total Harmonic Distortion (THD)</div>
<div style="position:absolute;left:1744.5px;top:788px;width:7px;height:140px;background:#5a96e6;border-radius:3.5px;"></div>
<div style="position:absolute;left:1741.4px;top:803px;width:14px;height:14px;background:#fff;border-radius:7px;"></div>
<div class="t" style="left:1734.65px;top:934.64px;font-size:12.5px;letter-spacing:0.837px;color:#fff;">8 dB</div>
<div style="position:absolute;left:1744.5px;top:966px;width:7px;height:140px;background:#5a96e6;border-radius:3.5px;"></div>
<div style="position:absolute;left:1741.4px;top:962px;width:14px;height:14px;background:#fff;border-radius:7px;"></div>
<div class="t" style="left:1731.25px;top:1113.14px;font-size:12.5px;letter-spacing:-0.865px;color:#fff;">120 dB</div>
<div style="position:absolute;left:0px;top:1136px;width:96px;height:24px;background:linear-gradient(#636363,#5a5a5a);box-sizing:border-box;border:1px solid #828282;"></div>
<div style="position:absolute;left:76px;top:1136px;width:20px;height:24px;background:#fff;box-sizing:border-box;border:1px solid #d0d0d0;"></div>
<svg style="position:absolute;left:76px;top:1136px" width="20" height="24"><path d="M6 10.6 L10 6.0 L14 10.6Z M6 13.2 L10 17.8 L14 13.2Z" fill="#666"/></svg>
<div class="t" style="left:6.65px;top:1138.95px;font-size:13.3px;letter-spacing:0.551px;color:#fff;">1/3 Oct</div>
<div class="t" style="left:114.15px;top:1138.75px;font-size:13.3px;letter-spacing:0.247px;color:#fff;">20 Hz</div>
<div style="position:absolute;left:169.8px;top:1144.6px;width:444.7px;height:6.8px;background:#5a96e6;border-radius:3.4px;"></div>
<svg style="position:absolute;left:160px;top:1134px" width="470" height="26"><path d="M5.900 2 h14.200 v5.900 l-7.100 8.100 l-7.100 -8.100z" fill="#fff"/><path d="M444 26 v-6.200 l7 -7.600 l7 7.600 v6.200z" fill="#fff"/></svg>
<div class="t" style="left:625.35px;top:1138.75px;font-size:13.3px;letter-spacing:0.219px;color:#fff;">24.0 kHz</div>
<div style="position:absolute;left:1631px;top:1136px;width:140px;height:24px;background:linear-gradient(#636363,#5a5a5a);box-sizing:border-box;border:1px solid #828282;"></div>
<div style="position:absolute;left:1751px;top:1136px;width:20px;height:24px;background:#fff;box-sizing:border-box;border:1px solid #d0d0d0;"></div>
<svg style="position:absolute;left:1751px;top:1136px" width="20" height="24"><path d="M6 10.6 L10 6.0 L14 10.6Z M6 13.2 L10 17.8 L14 13.2Z" fill="#666"/></svg>
<div class="t" style="left:1637.15px;top:1138.85px;font-size:13.3px;letter-spacing:0.128px;color:#fff;">Legend Down R</div>
</div></body></html>
